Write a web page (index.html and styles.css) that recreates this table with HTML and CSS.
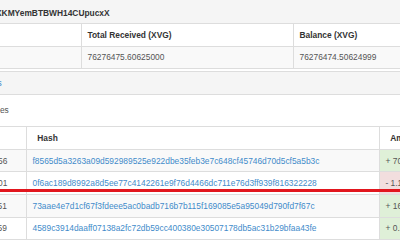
FILE: index.html
```html
<!DOCTYPE html>
<html lang="en">
<head>
<meta charset="utf-8">
<title>Address DDTtrjS2ynAS6qXKMYemBTBWH14CUpucxX</title>
<link rel="stylesheet" href="styles.css">
</head>
<body>
<div class="crop">
  <div class="page">
    <section class="panel">
      <div class="panel-heading"><strong>DDTtrjS2ynAS6qXKMYemBTBWH14CUpucxX</strong></div>
      <table class="tbl summary">
        <colgroup><col class="c-sent"><col class="c-recv"><col></colgroup>
        <thead>
          <tr><th>Total Sent (XVG)</th><th>Total Received (XVG)</th><th>Balance (XVG)</th></tr>
        </thead>
        <tbody>
          <tr><td>1.10000001</td><td>76276475.60625000</td><td>76276474.50624999</td></tr>
        </tbody>
      </table>
    </section>

    <section class="panel">
      <div class="panel-heading bar"><a href="#">Latest Transactions</a></div>
      <div class="dt-length">Show <span class="select">10</span> entries</div>
      <table class="tbl txs">
        <colgroup><col class="c-time"><col class="c-hash"><col></colgroup>
        <thead>
          <tr><th>Timestamp</th><th>Hash</th><th>Amount (XVG)</th></tr>
        </thead>
        <tbody>
          <tr><td class="time">12 Dec 2017 16:35:56</td><td><a href="#">f8565d5a3263a09d592989525e922dbe35feb3e7c648cf45746d70d5cf5a5b3c</a></td><td class="amt in">+ 70.00000000</td></tr>
          <tr><td class="time">12 Dec 2017 15:12:01</td><td><a href="#">0f6ac189d8992a8d5ee77c4142261e9f76d4466dc711e76d3ff939f816322228</a></td><td class="amt out">- 1.10000001</td></tr>
          <tr><td class="time">11 Dec 2017 22:47:51</td><td><a href="#">73aae4e7d1cf67f3fdeee5ac0badb716b7b115f169085e5a95049d790fd7f67c</a></td><td class="amt in">+ 16.00000000</td></tr>
          <tr><td class="time">11 Dec 2017 09:03:59</td><td><a href="#">4589c3914daaff07138a2fc72db59cc400380e30507178db5ac31b29bfaa43fe</a></td><td class="amt in">+ 0.50000000</td></tr>
        </tbody>
      </table>
    </section>
  </div>
  <div class="marker"></div>
</div>
</body>
</html>
```

FILE: styles.css
```css
* { box-sizing: border-box; }

html, body {
  margin: 0;
  padding: 0;
  background: #fff;
}

body {
  font-family: "Liberation Sans", Arial, sans-serif;
  font-size: 8.4px;
  line-height: 12px;
  color: #555;
}

a {
  color: #428bca;
  text-decoration: none;
}

.crop {
  position: relative;
  width: 400px;
  height: 240px;
  overflow: hidden;
}

.page {
  width: 620px;
  margin: -1px 0 0 -82px;
}

.panel {
  background: #fff;
  border: 1px solid #ddd;
  border-radius: 2px;
}

.panel + .panel {
  margin-top: 2px;
}

.panel-heading {
  background: #f5f5f5;
  border-bottom: 1px solid #ddd;
  padding: 7px 10px 4px;
  color: #333;
}

.panel-heading strong {
  font-weight: bold;
}

.panel-heading.bar {
  padding: 5px 10px;
}

.dt-length {
  height: 31px;
  padding: 9px 10px 0;
  white-space: nowrap;
  color: #555;
}

.select {
  display: inline-block;
  width: 29px;
  height: 12px;
  line-height: 10px;
  border: 1px solid #ccc;
  border-radius: 2px;
  padding: 0 3px;
  vertical-align: top;
}

.tbl {
  width: 100%;
  table-layout: fixed;
  border-collapse: collapse;
}

.tbl th,
.tbl td {
  padding: 4.8px 6px;
  border: 1px solid #ddd;
  text-align: left;
  white-space: nowrap;
  overflow: hidden;
  vertical-align: top;
}

.tbl th {
  color: #333;
  font-weight: bold;
}

.tbl tr > :first-child { border-left: 0; }
.tbl tr > :last-child { border-right: 0; }

.summary thead tr > * { border-top: 0; }
.summary tbody tr:last-child > * { border-bottom: 0; }

.summary tbody tr:nth-child(odd) td,
.txs tbody tr:nth-child(odd) td {
  background: #f9f9f9;
}

.c-sent { width: 162px; }
.c-recv { width: 212px; }
.c-time { width: 107px; }
.c-hash { width: 353px; }

.txs th {
  padding-left: 10.8px;
  padding-right: 10.8px;
}

.txs tbody tr:last-child > * { border-bottom: 0; }

.time { color: #555; }

.txs tbody tr td.amt.in { background: #dff0d8; }
.txs tbody tr td.amt.out { background: #f2dede; }

.marker {
  position: absolute;
  left: 0;
  right: 0;
  top: 189px;
  height: 3px;
  background: #e2161e;
}
```
